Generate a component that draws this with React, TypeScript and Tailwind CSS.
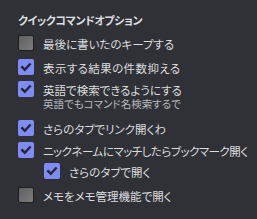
import { FC, ReactNode } from 'react';

const Check: FC<{ on: boolean }> = ({ on }) =>
  on ? (
    <span className="flex h-[16px] w-[16px] shrink-0 items-center justify-center rounded-[2px] bg-[#7f8cf7]">
      <svg width="12" height="12" viewBox="0 0 12 12" fill="none">
        <path d="M2.2 6.2 L4.8 8.7 L9.8 3.4" stroke="#26282c" strokeWidth="2.4" strokeLinecap="square" />
      </svg>
    </span>
  ) : (
    <span className="h-[16px] w-[16px] shrink-0 rounded-[2px] border border-[#1c1d20] bg-gradient-to-br from-[#5f5f5f] to-[#7d7d7d]" />
  );

interface RowProps {
  on: boolean;
  label: string;
  sub?: ReactNode;
  className?: string;
  labelClass?: string;
}

const Row: FC<RowProps> = ({ on, label, sub, className, labelClass }) => (
  <div className={'flex items-start gap-[9px] ' + (className ?? '')}>
    <Check on={on} />
    <div className="flex flex-col">
      <span className={'h-[17px] leading-[18px] text-[11.5px] text-[#dcddde] whitespace-nowrap ' + (labelClass ?? '')}>
        {label}
      </span>
      {sub && <span className="h-[12px] leading-[12px] text-[10.5px] text-[#b9bbbe] whitespace-nowrap">{sub}</span>}
    </div>
  </div>
);

export default function App() {
  return (
    <div
      className="h-[219px] w-[257px] overflow-hidden bg-[#2f3136] pl-[18px] pt-[12px] [font-feature-settings:'palt']"
      style={{ fontFamily: '"Noto Sans CJK JP", "Noto Sans", sans-serif' }}
    >
      <div className="h-[16px] leading-[17px] text-[11px] font-bold tracking-[-0.4px] text-[#dcddde] whitespace-nowrap">
        クイックコマンドオプション
      </div>
      <Row on={false} label="最後に書いたのキープする" className="mt-[7px]" />
      <Row on label="表示する結果の件数抑える" className="mt-[7px]" labelClass="tracking-[0.4px]" />
      <Row on label="英語で検索できるようにする" sub="英語でもコマンド名検索するで" className="mt-[5px]" />
      <Row on label="さらのタブでリンク開くわ" className="mt-[10px]" />
      <Row on label="ニックネームにマッチしたらブックマーク開く" className="mt-[5px]" labelClass="tracking-[-0.5px]" />
      <Row on label="さらのタブで開く" className="ml-[26px] mt-[4px]" />
      <Row on={false} label="メモをメモ管理機能で開く" className="mt-[7px]" />
    </div>
  );
}
